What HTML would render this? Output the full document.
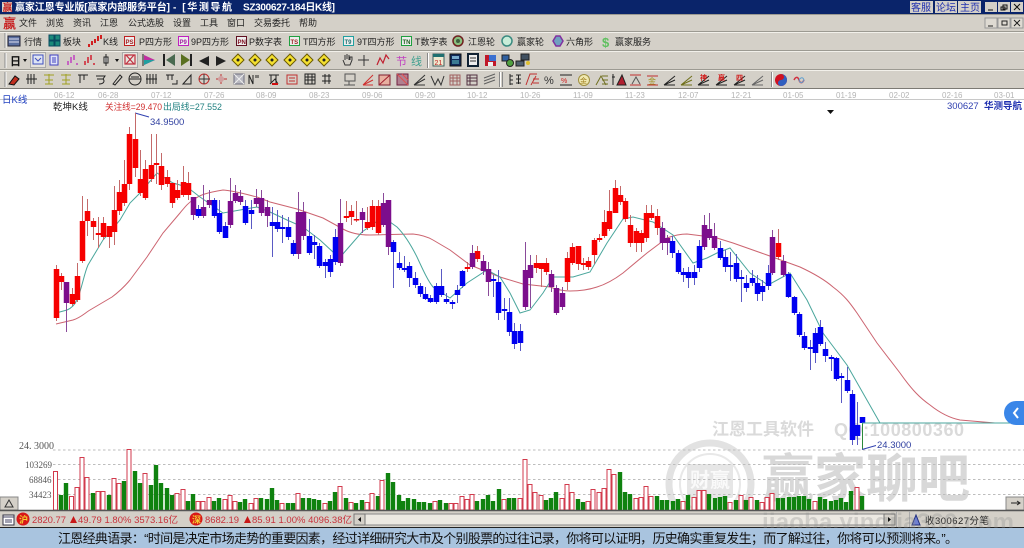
<!DOCTYPE html>
<html><head><meta charset="utf-8"><title>赢家江恩专业版</title>
<style>
html,body{margin:0;padding:0;background:#fff;overflow:hidden}
svg{display:block;position:absolute;left:0;top:0;filter:blur(.3px)}
text{font-family:"Liberation Sans","Noto Sans CJK SC",sans-serif;white-space:pre}
.m{font-size:9px;fill:#222}
.d{font-size:8px;fill:#b4b4b4;font-family:"Liberation Sans",sans-serif}
.s{font-size:9.5px;fill:#c8323c;font-family:"Liberation Sans","Noto Sans CJK SC",sans-serif}
.a{font-size:9px;fill:#555;font-family:"Liberation Serif",serif}
.e{fill:none;stroke:#222;stroke-width:1}
</style></head><body>
<svg width="1024" height="548" viewBox="0 0 1024 548" xmlns="http://www.w3.org/2000/svg">
<rect width="1024" height="548" fill="#fff"/>
<!-- title -->
<rect width="1024" height="14" fill="#0a246a"/>
<rect x="2" y="2" width="10" height="10" fill="#d9d4c8"/>
<text x="2.5" y="11" font-size="10" fill="#c81e1e" font-weight="bold">赢</text>
<text x="15" y="10.5" font-size="10" fill="#fff" font-weight="bold" textLength="155" lengthAdjust="spacing">赢家江恩专业版[赢家内部服务平台]</text>
<text x="173" y="10.5" font-size="10" fill="#fff" font-weight="bold" textLength="59" lengthAdjust="spacing">- [华测导航</text>
<text x="243" y="10.5" font-size="10" fill="#fff" font-weight="bold" textLength="92" lengthAdjust="spacing">SZ300627-184日K线]</text>
<g fill="#d4d0c8"><rect x="910" y="1" width="23" height="12"/><rect x="935" y="1" width="22" height="12"/><rect x="958" y="1" width="23" height="12"/><rect x="985" y="2" width="12" height="10"/><rect x="998" y="2" width="12" height="10"/><rect x="1011" y="2" width="12" height="10"/></g>
<g font-size="10" fill="#2030b0"><text x="911" y="11">客服</text><text x="936" y="11">论坛</text><text x="960" y="11">主页</text></g>
<path d="M988 10h5M1003 5h4v4h-4zM1001 7h4v3h-4zM1014 4l6 6M1020 4l-6 6" stroke="#111" stroke-width="1" fill="none"/>
<!-- toolbars -->
<rect y="14" width="1024" height="75" fill="#d4d0c8"/>
<path d="M0 14.5H1024M0 31.5H1024M0 50.5H1024M0 69.5H1024" stroke="#9c9a92"/>
<path d="M0 32.5H1024M0 51.5H1024M0 70.5H1024" stroke="#f2f0ea"/>
<path d="M0 88.5H1024" stroke="#7c7a74"/>
<path d="M5 33v15M5 53v15M5 72v15" stroke="#888"/>
<path d="M6 33v15M6 53v15M6 72v15" stroke="#fff"/>
<g><rect x="985" y="18" width="12" height="10" fill="#dedad2" stroke="#999"/><rect x="998" y="18" width="12" height="10" fill="#dedad2" stroke="#999"/><rect x="1011" y="18" width="12" height="10" fill="#dedad2" stroke="#999"/></g>
<path d="M988 26h5M1002 21h5v4h-5zM1014 20l6 6M1020 20l-6 6" stroke="#222" fill="none"/>
<text x="3" y="28" font-size="13" fill="#c81e1e" font-weight="bold">赢</text>
<g><text x="19" y="26" class="m">文件</text><text x="46" y="26" class="m">浏览</text><text x="73" y="26" class="m">资讯</text><text x="100" y="26" class="m">江恩</text><text x="128" y="26" class="m">公式选股</text><text x="173" y="26" class="m">设置</text><text x="200" y="26" class="m">工具</text><text x="227" y="26" class="m">窗口</text><text x="254" y="26" class="m">交易委托</text><text x="299" y="26" class="m">帮助</text></g>
<!-- row 1 -->
<g>
<text x="24" y="45" class="m">行情</text><text x="63" y="45" class="m">板块</text><text x="103" y="45" class="m">K线</text><text x="139" y="45" class="m">P四方形</text><text x="191" y="45" class="m">9P四方形</text><text x="249" y="45" class="m">P数字表</text><text x="303" y="45" class="m">T四方形</text><text x="357" y="45" class="m">9T四方形</text><text x="415" y="45" class="m">T数字表</text><text x="468" y="45" class="m">江恩轮</text><text x="517" y="45" class="m">赢家轮</text><text x="566" y="45" class="m">六角形</text><text x="615" y="45" class="m">赢家服务</text>
</g>
<rect x="8" y="36" width="12" height="10" fill="#5a6ea0" stroke="#223"/><path d="M9 39h10M9 42h10" stroke="#dde"/>
<path d="M49 35h5v5h-5zM55 35h5v5h-5zM49 41h5v5h-5zM55 41h5v5h-5z" fill="#1a8a7a" stroke="#0a4a60"/>
<path d="M89 47v-3M92 45v-4M95 43v-4M98 41v-5M101 39v-4" stroke="#d02020" stroke-width="2"/>
<g font-size="7" font-weight="bold" font-family="Liberation Sans">
<rect x="124.500" y="36.500" width="10" height="9" fill="#eee" stroke="#c02020"/><text x="125.500" y="44" fill="#a02020" style="font-size:6px">PS</text>
<rect x="178.500" y="36.500" width="10" height="9" fill="#eee" stroke="#c020c0"/><text x="179.500" y="44" fill="#a020a0" style="font-size:6px">P9</text>
<rect x="236.500" y="36.500" width="10" height="9" fill="#eee" stroke="#601020"/><text x="237.500" y="44" fill="#801020" style="font-size:6px">PN</text>
<rect x="289.500" y="36.500" width="10" height="9" fill="#eee" stroke="#20a040"/><text x="290.500" y="44" fill="#a02020" style="font-size:6px">TS</text>
<rect x="343.500" y="36.500" width="10" height="9" fill="#eee" stroke="#20a0a0"/><text x="344.500" y="44" fill="#207070" style="font-size:6px">T9</text>
<rect x="401.500" y="36.500" width="10" height="9" fill="#eee" stroke="#20a040"/><text x="402.500" y="44" fill="#206020" style="font-size:6px">TN</text>
</g>
<circle cx="458" cy="41" r="5" fill="#8ac080" stroke="#702020" stroke-width="1.500"/><circle cx="458" cy="41" r="2" fill="#406040"/>
<circle cx="507" cy="41" r="5" fill="#c8ecd8" stroke="#3a8a80" stroke-width="1.500"/>
<path d="M552 36l4 0 3 5-3 5-4 0-3-5z" fill="#70a0c0" stroke="#8030a0" stroke-width="1.500" transform="translate(4 0)"/>
<text x="602" y="47" font-size="13" font-weight="bold" fill="#60c060">$</text>
<!-- row 2 -->
<text x="10" y="65" font-size="11" font-weight="bold" fill="#111">日</text>
<path d="M23 59h4l-2 3zM115 59h4l-2 3z" fill="#111"/>
<rect x="30.500" y="52.500" width="15" height="15" fill="#e6e3dc" stroke="#aaa"/><path d="M33 55h10v9H33zM35 58l3 3 3-3" fill="#dde4f4" stroke="#4050c0"/>
<path d="M50 55h8v10h-8zM52 58h4M52 60h4M52 62h4" fill="#e0e4f8" stroke="#4040c0"/>
<path d="M68 65v-4M71 63v-6M74 60v-5M77 65v-2" stroke="#c040c0" stroke-width="1.500"/>
<path d="M85 65v-4M88 63v-6M91 60v-5M94 65v-2" stroke="#d02030" stroke-width="1.500"/>
<path d="M106 54v12M104 57h4v6h-4z" fill="#eee" stroke="#222"/>
<rect x="122.500" y="52.500" width="15" height="15" fill="#e6e3dc" stroke="#aaa"/><path d="M125 55h10v9h-10zM126 55l8 9M134 55l-8 9" fill="none" stroke="#c03040" stroke-width="1.200"/>
<path d="M143 54v12" stroke="#222"/><path d="M144 55l11 5-11 5z" fill="#c030a0"/><path d="M144 60h11l-11 5z" fill="#20a0a0"/>
<path d="M164 54v12" stroke="#222" stroke-width="2"/><path d="M175 54v12l-9-6z" fill="#4a6a50"/>
<path d="M191 54v12" stroke="#222" stroke-width="2"/><path d="M181 54v12l9-6z" fill="#5a7020"/>
<path d="M199 61l10-5v10z" fill="#222"/><path d="M216 56l10 5-10 5z" fill="#222"/>
<g fill="#f4e030" stroke="#6a5a00"><path d="M238 54l6 6-6 6-6-6z"/><path d="M255 54l6 6-6 6-6-6z"/><path d="M272 54l6 6-6 6-6-6z"/><path d="M290 54l6 6-6 6-6-6z"/><path d="M307 54l6 6-6 6-6-6z"/><path d="M324 54l6 6-6 6-6-6z"/></g>
<g fill="#222"><circle cx="238" cy="60" r="1.500"/><circle cx="255" cy="60" r="1.500"/><circle cx="272" cy="60" r="1.500"/><circle cx="290" cy="60" r="1.500"/><circle cx="307" cy="60" r="1.500"/><circle cx="324" cy="60" r="1.500"/></g>
<path d="M343 60l2 5h5l2-5v-3l-2 0v3M345 55v5M347 54v5M349 55v5" fill="none" stroke="#333"/>
<path d="M364 55v11M358 60h11" stroke="#333"/>
<path d="M377 65l3-7 3 5 3-8 3 4" fill="none" stroke="#c02030" stroke-width="1.200"/>
<text x="396" y="65" font-size="11" fill="#c040c0">节</text><text x="411" y="65" font-size="11" fill="#40a090">线</text>
<path d="M427.500 53v15" stroke="#888"/><path d="M428.500 53v15" stroke="#fff"/>
<rect x="433" y="54" width="11" height="12" fill="#f0ead0" stroke="#406060"/><path d="M433 54h11v3h-11z" fill="#207070"/><text x="434.500" y="65" font-size="7" fill="#c02020">21</text>
<rect x="450" y="54" width="11" height="12" fill="#102a5a" stroke="#111"/><rect x="452" y="56" width="7" height="3" fill="#7ac"/><path d="M452 61h7M452 63h7" stroke="#6cc"/>
<rect x="468" y="54" width="10" height="12" fill="#eee" stroke="#123" stroke-width="2"/><path d="M470 58h6M470 61h6" stroke="#333"/>
<rect x="485" y="55" width="11" height="11" fill="#c01828"/><rect x="489" y="55" width="7" height="6" fill="#3a70d0"/><rect x="488" y="62" width="5" height="4" fill="#eee"/>
<rect x="502" y="55" width="7" height="6" fill="#3060a0" stroke="#222"/><circle cx="510" cy="63" r="3.500" fill="#50a040" stroke="#222"/>
<rect x="521" y="54" width="8" height="6" fill="#405060" stroke="#222"/><rect x="516" y="61" width="8" height="5" fill="#506070" stroke="#222"/><circle cx="528" cy="63" r="2" fill="#e0c030"/>
<!-- row 3 -->
<path d="M9 84l6-8 4 3-5 6z" fill="#c03020" stroke="#111"/>
<g class="e">
<path d="M26 79h11M28 74v10M31 74v10M34 74v10"/>
<path d="M78 75h10M80 75v8M84 75v5"/>
<path d="M96 76h9l-2 3h-6M99 84c5 0 6-3 4-5"/>
<path d="M113 84l7-9 2 2-7 8z"/>
<circle cx="135" cy="79" r="6"/><path d="M129 79h12M131 77h8"/>
<path d="M147 74v10M150 74v10M153 74v10M156 74v10M146 79h11"/>
<path d="M166 75h8M168 75v5M172 75v5M172 84h5v-4"/>
<path d="M183 84l8-9v9zM183 84h8"/>
<path d="M249 84v-9l4 9v-9M256 78v-3M258 78v-3"/>
<path d="M305 74h10v10h-10zM305 77h10M305 80h10M308 74v10M312 74v10"/>
<path d="M322 76h9M322 81h9M325 74v10M329 74v10"/>
</g>
<g stroke="#a0a020" fill="none"><path d="M44 75h10M49 74v10M45 84h8M45 80h8"/><path d="M61 75h10M66 74v10M62 84h8M62 80h8"/></g>
<circle cx="204" cy="79" r="5" fill="none" stroke="#c03030"/><path d="M199 79h11M204 74v10" stroke="#333"/>
<path d="M216 79h11M221 74v10" stroke="#c03030"/><circle cx="221" cy="79" r="3" fill="#d0a0a0"/>
<rect x="234" y="74" width="10" height="10" fill="#b8b8c0" stroke="#707080"/><path d="M234 74l10 10M244 74l-10 10" stroke="#eee"/>
<path d="M269 75h10M271 75v8M276 75v8M270 84l5-5 3 5" fill="none" stroke="#222"/><path d="M272 84h6" stroke="#d01010" stroke-width="2"/>
<rect x="287" y="75" width="10" height="9" fill="none" stroke="#c03030"/><path d="M289 78h6M289 81h6" stroke="#c03030"/>
<path d="M345 74h10v7h-10zM349 81v4M344 85h11" fill="none" stroke="#555"/>
<path d="M363 85l10-10M363 85l10-5M363 85h10" stroke="#d03030" fill="none"/><rect x="379" y="75" width="11" height="10" fill="#e8b0a0" stroke="#802030"/><path d="M379 85l11-10" stroke="#a02030"/>
<rect x="397" y="74" width="11" height="11" fill="#b08090" stroke="#702040"/><path d="M397 74l11 11M402 74l6 6" stroke="#e05050"/>
<path d="M414 85l11-10M414 85h11M414 85l11-6" stroke="#333" fill="none"/>
<path d="M431 76l4 9 3-6 3 6 3-9" stroke="#333" fill="none"/>
<path d="M450 75h10v10h-10zM450 78h10M450 81h10M453 75v10M457 75v10" stroke="#a06060" fill="none"/>
<path d="M467 75h10v10h-10zM467 78h10M467 81h10M470 75v10" stroke="#503040" fill="none"/>
<path d="M484 78l11-4M484 81l11-4M484 84l11-4" stroke="#606060" fill="none"/>
<path d="M499.500 72v15M502.500 72v15" stroke="#888"/><path d="M500.500 72v15" stroke="#fff"/>
<path d="M510 74v11M510 76h3M510 80h3M510 84h3M516 75h5M516 79h5M516 83h5M518.500 75v9" stroke="#222" fill="none"/>
<path d="M526 85l4-11h7M536 76l-5 9M533 79h6M533 83h6" stroke="#c03030" fill="none"/>
<text x="544" y="84" font-size="11" fill="#333">%</text>
<path d="M560 75h12M560 85h12" stroke="#222"/><text x="561" y="83" font-size="7" fill="#d02020">%</text>
<circle cx="584" cy="80" r="5.500" fill="#f0e8b0" stroke="#a09040"/><text x="580" y="83" font-size="7" fill="#a08020">金</text>
<path d="M596 85l5-9 5 9M602 76h6M602 80h6M602 84h6" stroke="#707020" fill="none"/>
<path d="M613 74v11M612 77h3" stroke="#222"/><path d="M617 85l5-10 4 10z" fill="#b02030" stroke="#222"/>
<path d="M630 75h11M630 85h11" stroke="#c03030"/><path d="M632 84l4-7 4 7" stroke="#555" fill="none"/>
<path d="M647 76h11M647 85h11" stroke="#c03030"/><text x="648" y="84" font-size="8" fill="#a09020">金</text>
<g fill="none" stroke="#222"><path d="M664 85h11M664 85l11-5M664 85l11-9"/><path d="M681 85h11M681 85l11-5M681 85l11-9" stroke="#70701a"/><path d="M698 85h11M698 85l11-5M698 85l11-9"/><path d="M716 85h11M716 85l11-5M716 85l11-9"/><path d="M734 85h11M734 85l11-5M734 85l11-9"/><path d="M752 85h11M752 85l11-5M752 85l11-9" stroke="#666"/></g>
<g font-size="7" fill="#d01818" font-weight="bold"><text x="700" y="80">神</text><text x="718" y="80">赢</text><text x="736" y="80">四</text></g>
<path d="M771.500 72v15" stroke="#888"/><path d="M772.500 72v15" stroke="#fff"/>
<circle cx="781" cy="80" r="6" fill="#d01020"/><path d="M781 74a6 6 0 0 1 0 12a3 3 0 0 1 0-6a3 3 0 0 0 0-6" fill="#3060c0"/>
<path d="M794 80c2-4 4-3 5 0s3 4 5 0" fill="none" stroke="#d03040" stroke-width="1.500"/><path d="M799 80c1 3 3 4 5 0c-1-3-3-3-5 0" fill="none" stroke="#60a0d0"/>
<!-- axis -->
<path d="M0 99.500H1024" stroke="#c8c8c8"/>
<g><text x="54" y="98" class="d">06-12</text><text x="98" y="98" class="d">06-28</text><text x="151" y="98" class="d">07-12</text><text x="204" y="98" class="d">07-26</text><text x="256" y="98" class="d">08-09</text><text x="309" y="98" class="d">08-23</text><text x="362" y="98" class="d">09-06</text><text x="415" y="98" class="d">09-20</text><text x="467" y="98" class="d">10-12</text><text x="520" y="98" class="d">10-26</text><text x="573" y="98" class="d">11-09</text><text x="625" y="98" class="d">11-23</text><text x="678" y="98" class="d">12-07</text><text x="731" y="98" class="d">12-21</text><text x="783" y="98" class="d">01-05</text><text x="836" y="98" class="d">01-19</text><text x="889" y="98" class="d">02-02</text><text x="942" y="98" class="d">02-16</text><text x="994" y="98" class="d">03-01</text></g>
<text x="2" y="103" font-size="9.500" fill="#2040c0">日K线</text>
<text x="53" y="110" font-size="9.500" fill="#222">乾坤K线</text>
<text x="105" y="110" font-size="9" fill="#d03030" textLength="57" lengthAdjust="spacingAndGlyphs">关注线=29.470</text>
<text x="163" y="110" font-size="9" fill="#208080" textLength="59" lengthAdjust="spacingAndGlyphs">出局线=27.552</text>
<text x="947" y="109" font-size="9.500" fill="#3040b0">300627</text>
<text x="984" y="109" font-size="9.500" fill="#2030b0" font-weight="bold">华测导航</text>
<path d="M827 110h7l-3.500 4z" fill="#111"/>
<path d="M135 113l14 4" stroke="#3040b0" fill="none"/>
<text x="150" y="125" font-size="9.500" fill="#3040a0">34.9500</text>
<!-- watermark -->
<text x="712" y="435" font-size="17" font-weight="bold" fill="#dadada">江恩工具软件</text>
<text x="834" y="436" font-size="18" font-weight="bold" fill="#dadada" textLength="130" lengthAdjust="spacing">QQ:100800360</text>
<text x="762" y="497" font-size="52" font-weight="bold" fill="#d8d8d8">赢家聊吧</text>
<circle cx="710" cy="484" r="41" fill="none" stroke="#e2e2e2" stroke-width="7"/>
<circle cx="710" cy="484" r="30" fill="none" stroke="#e8e8e8" stroke-width="2"/>
<rect x="687" y="464" width="46" height="34" fill="#e6e6e6" rx="2"/>
<text x="690" y="487" font-size="20" font-weight="bold" fill="#fafafa">财赢</text>
<!-- grid -->
<path d="M53 450H1024M53 464.500H1024M53 479.500H1024M53 494.500H1024" stroke="#bdbdbd" stroke-dasharray="2.500 2.500"/>
<text x="19" y="449" class="a" style="font-size:10px">24. 3000</text>
<text x="25" y="468" class="a">103269</text><text x="29" y="483" class="a">68846</text><text x="29" y="498" class="a">34423</text>
<!-- MA -->
<path fill="none" stroke="#cc6470" stroke-width="1" d="M56 324L73 320C80 318 85 313 90 310L112 297C120 291 125 286 130 280L147 257L163 233L180 213C185 207 188 203 193 200C200 195 205 193 223 190C235 191 245 194 257 197L270 202L297 209L323 218L343 229C350 233 360 235 370 235L413 234C422 235 428 237 433 240L450 250L470 265L500 277L523 284L550 287C558 290 564 291 570 291C580 291 588 290 597 287C607 284 615 279 623 273L647 253L667 238C675 235 680 234 687 234L703 236L717 238L733 243L767 255L800 267C815 274 825 280 833 287C845 296 850 303 857 313L877 343L900 373C912 390 920 398 930 405C940 413 950 418 960 420L995 423"/>
<path fill="none" stroke="#4aa69c" stroke-width="1" d="M56 313L67 310C72 308 75 304 77 300C82 288 84 274 88 265L103 240L120 220L130 203L140 193L157 173L173 183L187 187L200 197L223 213L240 210L257 207L270 212L287 220L303 227L320 240L333 252L342 255L362 232L383 217L397 227C405 235 411 245 417 257C423 270 428 281 433 287L450 298L467 283L487 270L500 277L510 293L520 313L530 310L543 293L553 277L573 277L590 272L607 243L623 219L633 217L653 222L673 235L693 263L707 258L717 253L730 248L750 273L768 285L790 273L807 300L823 333L847 365L880 423H1024"/>
<!-- wicks -->
<g fill="none" stroke-width="1">
<path stroke="#c46a6a" d="M56.500 265V321M61.500 273V290M72.500 288V306M77.500 263V302M82.500 196V263M87.500 199V236M93.500 218V240M98.500 217V248M103.500 217V240M109.500 226V248M114.500 186V245M119.500 180V215M124.500 160V206M129.500 127V190M135.500 113V177M140.500 150V196M145.500 160V200M151.500 134V182M156.500 134V184M161.500 153V190M167.500 170V187M172.500 183V208M177.500 180V200M183.500 166V197M188.500 172V200M346.500 201V222M351.500 205V225M356.500 201V222M367.500 207V230M372.500 200V230M378.500 200V235M467.500 262V272M477.500 246V262M536.500 255V273M541.500 263V287M546.500 258V275M567.500 252V290M572.500 243V265M578.500 246V270M583.500 258V270M588.500 257V270M594.500 238V264M599.500 234V242M604.500 210V238M609.500 190V231M615.500 180V213M620.500 186V205M625.500 198V222M630.500 215V247M636.500 228V252M641.500 230V252M646.500 205V242M651.500 205V220M657.500 209V235M778.500 229V260"/>
<path stroke="#8a4a9a" d="M66.500 282V332M193.500 197V220M203.500 185V218M209.500 190V208M230.500 178V228M235.500 185V203M240.500 190V205M256.500 189V207M261.500 190V216M267.500 200V227M298.500 192V259M303.500 202V240M340.500 199V266M362.500 208V233M383.500 193V227M388.500 200V255M472.500 245V269M483.500 255V275M488.500 262V296M525.500 242V310M530.500 255V308M551.500 270V292M556.500 285V315M562.500 287V310M662.500 222V250M667.500 235V255M704.500 215V250M709.500 213V240M714.500 223V250M772.500 230V275M783.500 255V277"/>
<path stroke="#5a5ac4" d="M198.500 205V218M214.500 198V218M219.500 200V234M225.500 222V238M245.500 200V225M251.500 200V229M272.500 207V257M277.500 210V232M282.500 215V243M288.500 217V240M293.500 240V256M309.500 219V255M314.500 235V259M319.500 243V268M325.500 259V278M330.500 255V277M335.500 229V265M393.500 240V288M399.500 252V270M404.500 256V272M409.500 262V287M415.500 272V288M420.500 283V297M425.500 287V300M430.500 295V303M436.500 283V304M441.500 269V297M446.500 293V304M452.500 300V309M457.500 285V303M462.500 270V288M493.500 275V297M498.500 270V320M504.500 298V320M509.500 298V336M514.500 323V349M520.500 324V351M672.500 236V258M678.500 250V274M683.500 268V282M688.500 267V288M694.500 265V285M699.500 240V272M720.500 241V260M725.500 250V272M730.500 252V281M736.500 254V282M741.500 270V302M746.500 275V292M752.500 270V286M757.500 275V301M762.500 280V301M768.500 265V290M788.500 272V298M794.500 296V315M799.500 312V337M804.500 332V350M810.500 340V370M815.500 328V363M820.500 320V346M825.500 342V362M831.500 355V371M836.500 357V381M841.500 373V403M847.500 367V393M852.500 390V445M857.500 402V445"/>
</g>
<!-- bodies -->
<g fill="none" stroke-width="5.500">
<path stroke="#f60000" d="M56.500 269V318M61.500 276V282M72.500 294V304M77.500 276V300M82.500 221V261M87.500 211V221M93.500 221V227M98.500 233V235M103.500 223V237M109.500 226V237M114.500 210V232M119.500 192V211M124.500 184V203M129.500 134V184M135.500 139V168M140.500 179V193M145.500 169V198M151.500 165V179M156.500 163V165M161.500 166V185M167.500 177V184M172.500 183V203M177.500 190V198M183.500 182V195M188.500 183V195M346.500 216V218M351.500 211V217M356.500 219V220.500M367.500 222V228M372.500 206V227M378.500 206V233M467.500 267V269M477.500 251V259M536.500 263V268M541.500 263V269M546.500 263V272M567.500 258V282M572.500 247V263M578.500 246V264M583.500 263V265M588.500 261V267M594.500 240V255M599.500 238V240M604.500 222V236M609.500 211V229M615.500 188V213M620.500 195V202M625.500 201V219M630.500 225V243M636.500 231V243M641.500 233V243M646.500 213V238M651.500 213V218M657.500 216V228M778.500 243V257"/>
<path stroke="#7c0e8c" d="M66.500 282V303M193.500 197V215M203.500 207V216M209.500 200V205M230.500 201V225M235.500 193V201M240.500 196V202M256.500 198V204M261.500 198V213M267.500 207V216M298.500 212V254M303.500 212V236M340.500 223V263M362.500 212V220M383.500 203V225M388.500 200V247M472.500 253V267M483.500 261V271M488.500 269V282M525.500 270V307M530.500 265V278M551.500 274V287M556.500 288V313M562.500 293V307M662.500 228V243M667.500 238V243M704.500 225V247M709.500 229V238M714.500 236V248M772.500 237V273M783.500 261V275"/>
<path stroke="#0000f0" d="M198.500 209V216M214.500 200V216M219.500 213V232M225.500 226V238M245.500 206V223M251.500 210V214M272.500 222V226M277.500 222V229M282.500 227V229M288.500 227V237M293.500 243V254M309.500 236V253M314.500 242V245M319.500 246V266M325.500 262V266M330.500 259V272M335.500 237V262M393.500 242V252M399.500 263V268M404.500 268V270M409.500 266V278M415.500 278V285M420.500 286V294M425.500 294V299M430.500 298V302M436.500 286V302M441.500 286V295M446.500 299V302M452.500 302V304M457.500 290V295M462.500 271V286M493.500 279V281M498.500 282V313M504.500 309V311M509.500 312V332M514.500 331V344M520.500 331V343M672.500 241V253M678.500 253V272M683.500 272V275M688.500 272V278M694.500 272V278M699.500 246V268M720.500 248V258M725.500 257V267M730.500 265V267M736.500 263V279M741.500 277V279M746.500 283V288M752.500 278V283M757.500 283V294M762.500 286V292M768.500 273V286M788.500 274V297M794.500 297V313M799.500 314V335M804.500 336V348M810.500 347V349M815.500 333V353M820.500 327V344M825.500 349V356M831.500 357V359M836.500 358V379M841.500 376V378M847.500 380V391M852.500 394V440M857.500 425V436M862.500 417V423"/>
</g>
<path d="M862.500 423V449" stroke="#2a8a3a" fill="none"/>
<path d="M862 449.500L876 445.500" stroke="#3040b0" fill="none"/>
<text x="877" y="448" font-size="9.500" fill="#3040a0">24.3000</text>
<path d="M862 423H1024" stroke="#4aa69c"/>
<!-- volume: green -->
<path fill="none" stroke="#0f820f" stroke-width="4.400" d="M61 510V495M66 510V483M93 510V493M109 510V495M124 510V481M135 510V471M140 510V483M151 510V485M156 510V465M161 510V483M167 510V488M172 510V495M188 510V501M193 510V494M214 510V501M219 510V498M240 510V502M245 510V499M261 510V498M267 510V499M272 510V488M277 510V500M288 510V503M293 510V503M303 510V498M309 510V498M314 510V499M319 510V500M330 510V501M335 510V492M346 510V498M356 510V503M362 510V500M378 510V496M388 510V473M393 510V482M399 510V495M403 510V501M408 510V498M414 510V499M419 510V502M424 510V502M430 510V503M440 510V500M446 510V503M477 510V501M483 510V499M488 510V495M493 510V501M499 510V489M509 510V498M514 510V498M546 510V500M551 510V498M556 510V492M578 510V499M583 510V502M620 510V472M625 510V492M630 510V494M657 510V496M662 510V500M667 510V500M673 510V501M678 510V499M688 510V495M709 510V494M715 510V498M720 510V497M725 510V496M736 510V500M746 510V500M757 510V500M778 510V498M783 510V498M789 510V497M794 510V497M799 510V496M804 510V496M809 510V499M820 510V497M825 510V499M831 510V501M836 510V500M841 510V498M846 510V502M851 510V491M862 510V496"/>
<!-- volume: red hollow -->
<path fill="#fff" stroke="#d23a4c" stroke-width="1" d="M53.500 510V471.500h4V510zM69.500 510V496.500h4V510zM75 510V487.500h4V510zM80 510V457.500h4V510zM85 510V477.500h4V510zM96 510V491.500h4V510zM101 510V491.500h4V510zM112 510V478.500h4V510zM117 510V483.500h4V510zM127 510V449.500h4V510zM143 510V473.500h4V510zM175 510V493.500h4V510zM181 510V489.500h4V510zM196 510V501.500h4V510zM201 510V501.500h4V510zM207 510V497.500h4V510zM223 510V499.500h4V510zM228 510V495.500h4V510zM233 510V501.500h4V510zM249 510V503.500h4V510zM254 510V498.500h4V510zM280 510V503.500h4V510zM296 510V493.500h4V510zM323 510V503.500h4V510zM338 510V486.500h4V510zM349 510V502.500h4V510zM365 510V502.500h4V510zM370 510V493.500h4V510zM380 510V480.500h4V510zM433 510V501.500h4V510zM449 510V503.500h4V510zM454 510V503.500h4V510zM460 510V496.500h4V510zM465 510V499.500h4V510zM470 510V494.500h4V510zM502 510V499.500h4V510zM518 510V498.500h4V510zM523 510V459.500h4V510zM528 510V484.500h4V510zM533 510V492.500h4V510zM539 510V495.500h4V510zM560 510V498.500h4V510zM565 510V484.500h4V510zM570 510V492.500h4V510zM586 510V501.500h4V510zM591 510V489.500h4V510zM597 510V492.500h4V510zM602 510V488.500h4V510zM607 510V469.500h4V510zM612 510V474.500h4V510zM634 510V498.500h4V510zM639 510V497.500h4V510zM644 510V486.500h4V510zM649 510V496.500h4V510zM681 510V501.500h4V510zM692 510V497.500h4V510zM697 510V490.500h4V510zM702 510V490.500h4V510zM728 510V502.500h4V510zM739 510V495.500h4V510zM749 510V497.500h4V510zM760 510V502.500h4V510zM765 510V497.500h4V510zM770 510V493.500h4V510zM813 510V501.500h4V510zM855 510V487.500h4V510z"/>
<!-- corner buttons -->
<rect x="0" y="497" width="18" height="13" fill="#d4d0c8" stroke="#888"/><path d="M5 507h8l-4-7z" fill="none" stroke="#333"/>
<rect x="1006" y="497" width="18" height="13" fill="#d4d0c8" stroke="#888"/><path d="M1011 503h9m-3-2l3 2-3 2" fill="none" stroke="#222"/>
<path d="M1024 401h-8a12 12 0 0 0 0 24h8z" fill="#3a86e8"/><path d="M1018 408l-4 5 4 5" fill="none" stroke="#fff" stroke-width="2"/>
<!-- status bar -->
<rect y="510" width="1024" height="18" fill="#d4d0c8"/>
<path d="M0 510.500H1024" stroke="#555" stroke-width="1.500"/>
<path d="M0 527.500H1024" stroke="#222"/>
<rect x="3" y="515" width="11" height="10" fill="#fff" stroke="#334"/><path d="M3 517h11M5 520h7M5 522h7" stroke="#446"/>
<circle cx="23" cy="519" r="6.500" fill="#d81818"/><text x="19" y="523" font-size="9" fill="#f4d030" font-weight="bold">沪</text>
<text x="32" y="523" class="s" textLength="34" lengthAdjust="spacing">2820.77</text><path d="M70 523h7l-3.500-7z" fill="#c81818"/><text x="78" y="523" class="s" textLength="100" lengthAdjust="spacing">49.79 1.80% 3573.16亿</text>
<circle cx="196" cy="519" r="6.500" fill="#d81818"/><text x="192" y="523" font-size="9" fill="#f4d030" font-weight="bold">深</text>
<text x="205" y="523" class="s" textLength="34" lengthAdjust="spacing">8682.19</text><path d="M244 523h7l-3.500-7z" fill="#c81818"/><text x="252" y="523" class="s" textLength="100" lengthAdjust="spacing">85.91 1.00% 4096.38亿</text>
<rect x="354" y="514" width="541" height="11" fill="#ece9e2" stroke="#888"/>
<rect x="354" y="514" width="11" height="11" fill="#d4d0c8" stroke="#777"/><path d="M361 517v5l-3-2.500z" fill="#111"/>
<rect x="884" y="514" width="11" height="11" fill="#d4d0c8" stroke="#777"/><path d="M888 517v5l3-2.500z" fill="#111"/>
<path d="M896.500 511v16M909.500 511v16" stroke="#aaa"/>
<path d="M916 525l-4 0 4-10 4 10z" fill="#7080d0" stroke="#223080"/>
<text x="925" y="524" font-size="9.500" fill="#222" textLength="64" lengthAdjust="spacing">收300627分笔</text>
<text x="762" y="530" font-size="24" font-weight="bold" fill="#8f8f8f" opacity=".3" textLength="252" lengthAdjust="spacing">jiaoba.yingjia360.com</text>
<!-- quote -->
<rect y="528" width="1024" height="20" fill="#a9c4df"/>
<text x="58" y="543" font-size="13" fill="#111" textLength="900" lengthAdjust="spacing">江恩经典语录：“时间是决定市场走势的重要因素，经过详细研究大市及个别股票的过往记录，你将可以证明，历史确实重复发生；而了解过往，你将可以预测将来。”。</text>
</svg>
</body></html>
